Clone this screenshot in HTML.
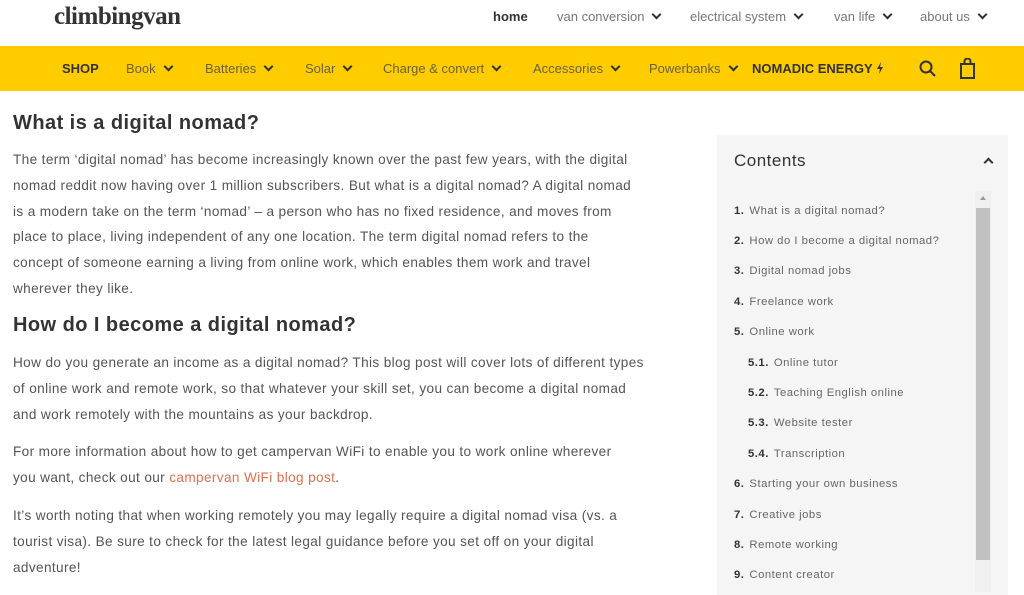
<!DOCTYPE html>
<html><head><style>
*{margin:0;padding:0;box-sizing:border-box}
body{width:1024px;height:592px;overflow:hidden;background:#fff;font-family:"Liberation Sans",sans-serif;color:#555;position:relative}
.a{position:absolute;white-space:nowrap}
.logo{left:54px;top:3px;font-family:"Liberation Serif",serif;font-weight:bold;font-size:25px;color:#333;letter-spacing:-0.5px}
.top{top:9px;font-size:13px;color:#777}
.chev{display:inline-block;width:7px;height:7px;border-right:2px solid #333;border-bottom:2px solid #333;transform:rotate(45deg);margin-left:9px;position:relative;top:-3px}
.bar{left:0;top:46px;width:1024px;height:45px;background:#ffcc00}
.nav{top:61px;font-size:13px;color:#6b6040}
.b{font-weight:bold;color:#333}
h2{position:absolute;left:13px;font-size:20px;color:#333;font-weight:bold;letter-spacing:0.45px}
p{position:absolute;left:13px;width:640px;font-size:13.6px;line-height:25.8px;color:#555;letter-spacing:0.37px}
.lnk{color:#e07050}
.panel{left:717px;top:135px;width:291px;height:460px;background:#f5f5f5}
.toc{left:734px;font-size:11.3px;color:#666;letter-spacing:0.5px}
.toc b{color:#333;margin-right:5px}
</style></head><body>
<div class="a logo">climbingvan</div>
<div class="a top b" style="left:493px;color:#333">home</div>
<div class="a top" style="left:557px">van conversion<span class="chev"></span></div>
<div class="a top" style="left:690px">electrical system<span class="chev"></span></div>
<div class="a top" style="left:834px">van life<span class="chev"></span></div>
<div class="a top" style="left:920px">about us<span class="chev"></span></div>
<div class="a bar"></div>
<div class="a nav b" style="left:62px">SHOP</div>
<div class="a nav" style="left:126px">Book<span class="chev"></span></div>
<div class="a nav" style="left:205px">Batteries<span class="chev"></span></div>
<div class="a nav" style="left:305px">Solar<span class="chev"></span></div>
<div class="a nav" style="left:383px">Charge &amp; convert<span class="chev"></span></div>
<div class="a nav" style="left:533px">Accessories<span class="chev"></span></div>
<div class="a nav" style="left:649px">Powerbanks<span class="chev"></span></div>
<div class="a nav b" style="left:752px">NOMADIC ENERGY</div>
<svg class="a" style="left:876px;top:62px" width="8" height="12" viewBox="0 0 8 12"><path d="M5 0L1 7h3l-1 5 4-7H4z" fill="#333"/></svg>
<svg class="a" style="left:918px;top:59px" width="20" height="20" viewBox="0 0 20 20"><circle cx="8" cy="8" r="5.5" fill="none" stroke="#333" stroke-width="2"/><path d="M12 12l5 5" stroke="#333" stroke-width="2"/></svg>
<svg class="a" style="left:959px;top:58px" width="18" height="22" viewBox="0 0 18 22"><rect x="2" y="6" width="13" height="14" fill="none" stroke="#333" stroke-width="2"/><path d="M5.5 6V3.5a3 3 0 016 0V6" fill="none" stroke="#333" stroke-width="2"/></svg>

<h2 style="top:112px">What is a digital nomad?</h2>
<p style="top:147px">The term ‘digital nomad’ has become increasingly known over the past few years, with the digital<br>nomad reddit now having over 1 million subscribers. But what is a digital nomad? A digital nomad<br>is a modern take on the term ‘nomad’ – a person who has no fixed residence, and moves from<br>place to place, living independent of any one location. The term digital nomad refers to the<br>concept of someone earning a living from online work, which enables them work and travel<br>wherever they like.</p>
<h2 style="top:314px">How do I become a digital nomad?</h2>
<p style="top:350px">How do you generate an income as a digital nomad? This blog post will cover lots of different types<br>of online work and remote work, so that whatever your skill set, you can become a digital nomad<br>and work remotely with the mountains as your backdrop.</p>
<p style="top:439px">For more information about how to get campervan WiFi to enable you to work online wherever<br>you want, check out our <span class="lnk">campervan WiFi blog post</span>.</p>
<p style="top:503px">It’s worth noting that when working remotely you may legally require a digital nomad visa (vs. a<br>tourist visa). Be sure to check for the latest legal guidance before you set off on your digital<br>adventure!</p>

<div class="a panel"></div>
<div class="a" style="left:734px;top:151px;font-size:17px;color:#333;letter-spacing:0.5px">Contents</div>
<div class="a" style="left:985px;top:159px;width:7px;height:7px;border-left:2px solid #333;border-top:2px solid #333;transform:rotate(45deg)"></div>
<div class="a" style="left:975px;top:191px;width:16px;height:401px;background:#f0f0f0"></div>
<div class="a" style="left:980px;top:196px;width:0;height:0;border-left:3px solid transparent;border-right:3px solid transparent;border-bottom:4px solid #999"></div>
<div class="a" style="left:976px;top:208px;width:14px;height:352px;background:#c1c1c1"></div>
<div class="a toc" style="top:205px"><b>1.</b>What is a digital nomad?</div>
<div class="a toc" style="top:235px"><b>2.</b>How do I become a digital nomad?</div>
<div class="a toc" style="top:265px"><b>3.</b>Digital nomad jobs</div>
<div class="a toc" style="top:296px"><b>4.</b>Freelance work</div>
<div class="a toc" style="top:326px"><b>5.</b>Online work</div>
<div class="a toc" style="top:357px;left:748px"><b>5.1.</b>Online tutor</div>
<div class="a toc" style="top:387px;left:748px"><b>5.2.</b>Teaching English online</div>
<div class="a toc" style="top:417px;left:748px"><b>5.3.</b>Website tester</div>
<div class="a toc" style="top:448px;left:748px"><b>5.4.</b>Transcription</div>
<div class="a toc" style="top:478px"><b>6.</b>Starting your own business</div>
<div class="a toc" style="top:509px"><b>7.</b>Creative jobs</div>
<div class="a toc" style="top:539px"><b>8.</b>Remote working</div>
<div class="a toc" style="top:569px"><b>9.</b>Content creator</div>
</body></html>
